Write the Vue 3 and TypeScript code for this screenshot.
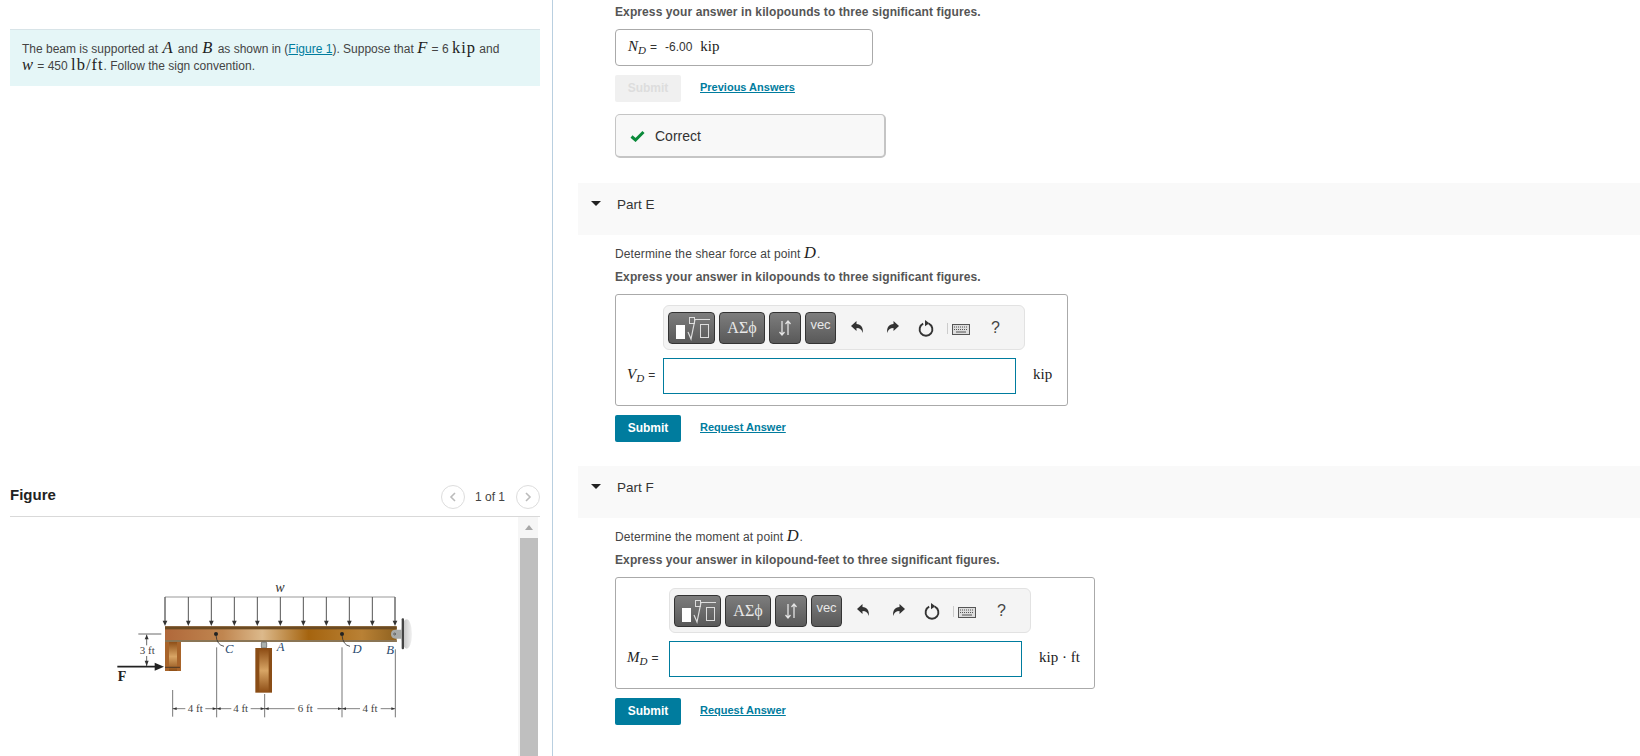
<script setup lang="ts">
interface Part {
  name: string
  determine: string
  express: string
  symbol: string
  unit: string
  labelWidth: number
  id: string
}
const parts: Part[] = [
  { id: 'e', name: 'Part E', determine: 'Determine the shear force at point', express: 'Express your answer in kilopounds to three significant figures.', symbol: 'V', unit: 'kip', labelWidth: 36 },
  { id: 'f', name: 'Part F', determine: 'Determine the moment at point', express: 'Express your answer in kilopound-feet to three significant figures.', symbol: 'M', unit: 'kip · ft', labelWidth: 42 },
]
const arrows: number[] = [195, 265, 334, 403, 472, 541, 610, 679, 748, 817, 885]
</script>

<template>
  <div class="page">
    <section class="left">
      <div class="intro">
        The beam is supported at <i class="m big gap">A</i> and <i class="m big gap">B</i> as shown in (<a class="lnk">Figure 1</a>). Suppose that <i class="m big">F</i> = 6 <span class="m big">kip</span> and<br />
        <i class="m big">w</i> = 450 <span class="m big">lb/ft</span>. Follow the sign convention.
      </div>
      <div class="fig-head">
        <h2>Figure</h2>
        <div class="pager">
          <span class="circle"><svg width="8" height="12" viewBox="0 0 8 12"><path d="M6 2 2 6l4 4" fill="none" stroke="#bbb" stroke-width="1.6" /></svg></span>
          <span class="count">1 of 1</span>
          <span class="circle"><svg width="8" height="12" viewBox="0 0 8 12"><path d="M2 2l4 4-4 4" fill="none" stroke="#bbb" stroke-width="1.6" /></svg></span>
        </div>
      </div>
      <div class="fig-body">
        <div class="fig-canvas">
          <svg width="330" height="160" viewBox="0 0 990 480">
            <defs>
              <linearGradient id="beam" x1="0" x2="1" y1="0" y2="0">
                <stop offset="0" stop-color="#b0683a" />
                <stop offset="0.25" stop-color="#c08650" />
                <stop offset="0.42" stop-color="#dcb98b" />
                <stop offset="0.62" stop-color="#a5640f" />
                <stop offset="0.85" stop-color="#b98135" />
                <stop offset="1" stop-color="#8f6220" />
              </linearGradient>
              <linearGradient id="col" x1="0" x2="0" y1="0" y2="1">
                <stop offset="0" stop-color="#8f4f17" />
                <stop offset="0.5" stop-color="#d8a565" />
                <stop offset="1" stop-color="#8f4f17" />
              </linearGradient>
              <linearGradient id="wall" x1="0" x2="1" y1="0" y2="0">
                <stop offset="0" stop-color="#bbb" />
                <stop offset="1" stop-color="#f2f2f2" />
              </linearGradient>
            </defs>
            <text x="540" y="65" class="t it big2" text-anchor="middle">w</text>
            <path d="M195 158V81H885V158" fill="none" stroke="#999" stroke-width="3" />
            <g v-for="x in arrows" :key="x">
              <path :d="`M${x} 81V158`" stroke="#555" stroke-width="3" />
              <path :d="`M${x - 7} 152H${x + 7}L${x} 168Z`" fill="#333" />
            </g>
            <rect x="195" y="169" width="695" height="47" fill="url(#beam)" />
            <rect x="195" y="169" width="695" height="9" fill="#6b4a22" />
            <rect x="195" y="210" width="695" height="6" fill="#8a7555" />
            <ellipse cx="920" cy="192" rx="16" ry="44" fill="url(#wall)" />
            <rect x="905" y="145" width="7" height="93" rx="3" fill="#444" />
            <path d="M873 192q0-13 14-13h18v27h-18q-14 0-14-14Z" fill="#a8aaa8" />
            <circle cx="884" cy="192" r="3" fill="none" stroke="#444" stroke-width="2" />
            <circle cx="348" cy="192" r="6" fill="#222" />
            <path d="M348 195q2 30 24 34" fill="none" stroke="#333" stroke-width="2.5" />
            <circle cx="726" cy="192" r="6" fill="#222" />
            <path d="M726 195q2 30 24 34" fill="none" stroke="#333" stroke-width="2.5" />
            <rect x="195" y="216" width="48" height="87" fill="#a8642a" />
            <rect x="207" y="216" width="24" height="87" fill="url(#col)" />
            <path d="M195 292H240" stroke="#222" stroke-width="2" />
            <rect x="484" y="216" width="16" height="18" rx="3" fill="#a9b0ad" stroke="#555" stroke-width="2" />
            <rect x="466" y="234" width="50" height="134" fill="#8a4d16" />
            <rect x="478" y="238" width="28" height="128" fill="url(#col)" />
            <path d="M115 192H184M140 194V226M140 258V288" fill="none" stroke="#444" stroke-width="2.4" />
            <path d="M134 208 140 194 146 208ZM134 272 140 288 146 272Z" fill="#333" />
            <text x="142" y="252" class="t" text-anchor="middle">3 ft</text>
            <path d="M52 290H170" stroke="#222" stroke-width="5" />
            <path d="M164 278 192 290 164 302Z" fill="#222" />
            <text x="66" y="333" class="t b" text-anchor="middle">F</text>
            <text x="388" y="250" class="t it" text-anchor="middle">C</text>
            <text x="542" y="244" class="t it" text-anchor="middle">A</text>
            <text x="771" y="248" class="t it" text-anchor="middle">D</text>
            <text x="870" y="251" class="t it" text-anchor="middle">B</text>
            <path d="M350 232V442M726 232V442M886 238V442M218 360V440M494 372V442" stroke="#444" stroke-width="2.2" />
            <path d="M218 416H256M316 416H394M452 416H584M652 416H780M842 416H884" stroke="#444" stroke-width="2" />
            <path d="M218 416l12-4v8ZM350 416l-12-4v8ZM350 416l12-4v8ZM494 416l-12-4v8ZM494 416l12-4v8ZM726 416l-12-4v8ZM726 416l12-4v8ZM886 416l-12-4v8Z" fill="#333" />
            <text x="286" y="426" class="t" text-anchor="middle">4 ft</text>
            <text x="422" y="426" class="t" text-anchor="middle">4 ft</text>
            <text x="616" y="426" class="t" text-anchor="middle">6 ft</text>
            <text x="810" y="426" class="t" text-anchor="middle">4 ft</text>
          </svg>
        </div>
        <div class="scrollbar">
          <span class="up"></span>
          <span class="thumb"></span>
        </div>
      </div>
    </section>

    <main class="right">
      <p class="express first">Express your answer in kilopounds to three significant figures.</p>
      <div class="answer">
        <i class="m v">N<sub>D</sub></i><span class="eq">=</span><span class="val">-6.00</span><span class="m kip">kip</span>
      </div>
      <div class="actions prev">
        <button class="submit off">Submit</button>
        <a class="lnk strong">Previous Answers</a>
      </div>
      <div class="correct">
        <svg width="15" height="12" viewBox="0 0 15 12"><path d="M1.5 6.5 5.5 10 13.5 2" fill="none" stroke="#0a8a3a" stroke-width="3" /></svg>
        <span>Correct</span>
      </div>

      <template v-for="p in parts" :key="p.id">
        <header class="band" :class="'band-' + p.id">
          <span class="tri"></span>
          <span>{{ p.name }}</span>
        </header>
        <p class="determine">{{ p.determine }} <i class="m big">D</i>.</p>
        <p class="express">{{ p.express }}</p>
        <div class="box" :class="'box-' + p.id">
          <div class="tools" :style="{ marginLeft: p.labelWidth + 'px' }">
            <button class="tb t1">
              <svg width="45" height="30" viewBox="0 0 45 30">
                <rect x="7" y="12" width="9" height="14" fill="#fff" />
                <rect x="20.5" y="4.5" width="5" height="6" fill="none" stroke="#ddd" />
                <path d="M19 19l3 7L26 6.5H41" fill="none" stroke="#ddd" stroke-width="1.2" />
                <rect x="31.5" y="11.5" width="8" height="13" fill="none" stroke="#ddd" />
              </svg>
            </button>
            <button class="tb t2">ΑΣϕ</button>
            <button class="tb t3">
              <svg width="14" height="18" viewBox="0 0 14 18"><path d="M4 2V16M1.5 13 4 16 6.5 13M10 16V2M7.5 5 10 2 12.5 5" fill="none" stroke="#e4e4e4" stroke-width="1.3" /></svg>
            </button>
            <button class="tb t4">vec</button>
            <svg class="ic undo" width="14" height="16" viewBox="0 0 14 16"><path d="M1 6 6.5 1V4C11 4 13.5 7.5 12.8 13 11.8 9.5 10 8 6.5 8V11Z" fill="#333" /></svg>
            <svg class="ic redo" width="14" height="16" viewBox="0 0 14 16"><path d="M13 6 7.5 1V4C3 4 .5 7.5 1.2 13 2.2 9.5 4 8 7.5 8V11Z" fill="#333" /></svg>
            <svg class="ic reset" width="16" height="18" viewBox="0 0 16 18"><path d="M10.8 4.6A6.4 6.4 0 1 1 5.2 4.6" fill="none" stroke="#333" stroke-width="1.9" /><path d="M7 1 11.4 4.2 7 7.2Z" fill="#333" /></svg>
            <span class="sep"></span>
            <svg class="ic kb" width="18" height="11" viewBox="0 0 18 11"><rect x=".5" y=".5" width="17" height="10" fill="#ddd" stroke="#555" /><path d="M2 3H16M2 5.5H16" stroke="#555" stroke-dasharray="1 1" /><path d="M4 8H14" stroke="#555" /></svg>
            <span class="help">?</span>
          </div>
          <div class="row">
            <span class="label" :style="{ width: p.labelWidth + 'px' }"><i class="m v">{{ p.symbol }}<sub>D</sub></i><span class="eq">=</span></span>
            <span class="input"></span>
            <span class="m unit">{{ p.unit }}</span>
          </div>
        </div>
        <div class="actions">
          <button class="submit">Submit</button>
          <a class="lnk strong">Request Answer</a>
        </div>
      </template>
    </main>
  </div>
</template>

<style scoped>
.page {
  display: flex;
  height: 756px;
  overflow: hidden;
  font-family: "Liberation Sans", Arial, sans-serif;
  font-size: 12px;
  color: #444;
  background: #fff;
}
.left {
  width: 553px;
  flex: none;
  box-sizing: border-box;
  border-right: 1px solid #b9cfe0;
  padding: 29px 12px 0 10px;
  display: flex;
  flex-direction: column;
}
.intro {
  height: 57px;
  box-sizing: border-box;
  border-top: 1px solid #d8e4e8;
  background: #e5f6f7;
  padding: 10px 12px;
  line-height: 16px;
}
.m { font-family: "Liberation Serif", "Times New Roman", serif; color: #222; }
.big { font-size: 16.5px; letter-spacing: 1px; }
.gap { margin: 0 1px; }
.lnk { color: #007c9e; text-decoration: underline; }
.strong { font-size: 11px; font-weight: 700; padding-bottom: 3px; }
.fig-head {
  margin-top: 384px;
  height: 47px;
  box-sizing: border-box;
  border-bottom: 1px solid #d9d9d9;
  display: flex;
  align-items: center;
  justify-content: space-between;
}
h2 { margin: 2px 0 0; font-size: 15px; font-weight: 700; color: #222; }
.pager { display: flex; align-items: center; gap: 10px; margin-top: 7px; }
.circle {
  width: 24px;
  height: 24px;
  box-sizing: border-box;
  border: 1px solid #ddd;
  border-radius: 50%;
  display: flex;
  align-items: center;
  justify-content: center;
}
.count { color: #444; margin-right: 1px; }
.fig-body { flex: 1; display: flex; min-height: 0; }
.fig-canvas { flex: 1; padding: 53px 0 0 90px; }
.scrollbar {
  width: 20px;
  box-sizing: border-box;
  padding-left: 2px;
  margin-right: 2px;
  flex: none;
  display: flex;
  flex-direction: column;
  background: #f6f6f6;
}
.up {
  height: 21px;
  flex: none;
  display: block;
  position: relative;
}
.up::before {
  content: "";
  position: absolute;
  left: 5px;
  top: 8px;
  border: 4px solid transparent;
  border-top: 0;
  border-bottom: 5px solid #a8a8a8;
}
.thumb { flex: 1; background: #bfbfbf; }
.t { font-family: "Liberation Serif", serif; font-size: 33px; fill: #444; }
.it { font-style: italic; font-size: 38px; fill: #2a4a70; }
.big2 { font-size: 42px; fill: #333; }
.b { font-weight: 700; font-size: 42px; fill: #222; }

.right {
  flex: 1;
  min-width: 0;
  padding: 5px 0 0 25px;
}
p { margin: 0; }
.express {
  margin-left: 37px;
  line-height: 14px;
  font-weight: 700;
  font-size: 12px;
  color: #555;
  letter-spacing: 0.1px;
}
.first { margin-bottom: 10px; }
.answer {
  margin-left: 37px;
  width: 258px;
  height: 37px;
  box-sizing: border-box;
  border: 1px solid #aaa;
  border-radius: 4px;
  padding: 0 0 2px 12px;
  display: flex;
  align-items: center;
}
.v { font-size: 15px; }
sub { font-size: 11px; vertical-align: -3px; line-height: 0; }
.eq { margin: 0 8px 0 4px; font-size: 12px; color: #333; }
.val { font-size: 12px; margin-right: 8px; color: #333; }
.kip { font-size: 15px; }
.actions {
  margin-left: 37px;
  display: flex;
  align-items: center;
  gap: 19px;
}
.prev { margin-top: 9px; }
button { font-family: inherit; margin: 0; padding: 0; }
.submit {
  width: 66px;
  height: 27px;
  border: 0;
  border-radius: 2px;
  background: #007c9e;
  color: #fff;
  font-weight: 700;
  font-size: 12px;
  padding-bottom: 2px;
}
.submit.off { background: #f0f0f0; color: #ddd; }
.correct {
  margin: 12px 0 0 37px;
  width: 271px;
  height: 44px;
  box-sizing: border-box;
  border: 1px solid #c5c5c5;
  border-bottom-width: 2px;
  border-right-width: 2px;
  border-radius: 5px;
  background: #f8f8f8;
  display: flex;
  align-items: center;
  gap: 10px;
  padding-left: 14px;
  font-size: 14px;
  color: #333;
}
.band {
  height: 52px;
  background: #f9f9f9;
  display: flex;
  align-items: flex-start;
  padding-top: 14px;
  box-sizing: border-box;
  font-size: 13.5px;
  color: #333;
  line-height: 15px;
}
.band-e { margin-top: 25px; }
.band-f { margin-top: 24px; }
.tri {
  margin: 4px 16px 0 13px;
  border: 5px solid transparent;
  border-bottom: 0;
  border-top: 5px solid #222;
}
.determine {
  margin: 9px 0 7px 37px;
  line-height: 17px;
  color: #444;
  letter-spacing: 0.12px;
}
.box {
  margin: 10px 0 9px 37px;
  box-sizing: border-box;
  border: 1px solid #aaa;
  border-radius: 3px;
  padding: 10px 0 11px 11px;
}
.box-e { width: 453px; }
.box-f { width: 480px; }
.tools {
  width: 362px;
  height: 45px;
  box-sizing: border-box;
  border: 1px solid #e2e2e2;
  border-radius: 6px;
  background: #f4f4f4;
  display: flex;
  align-items: center;
  padding-left: 4px;
}
.tb {
  height: 32px;
  box-sizing: border-box;
  border: 1px solid #333;
  border-radius: 4px;
  background: linear-gradient(#7d7d7d, #595959);
  color: #e8e8e8;
  display: flex;
  align-items: center;
  justify-content: center;
  margin-right: 4px;
  flex: none;
}
.t1 { width: 47px; }
.t2 { width: 46px; font-family: "Liberation Serif", serif; font-size: 16px; }
.t3 { width: 32px; }
.t4 { width: 31px; font-size: 13px; align-items: flex-start; padding-top: 4px; }
.ic { flex: none; }
.undo { margin-left: 10px; }
.redo { margin-left: 22px; }
.reset { margin-left: 18px; }
.sep { width: 1px; height: 11px; background: #ccc; margin: 2px 4px 0 13px; }
.kb { margin-top: 3px; }
.help { margin-left: 21px; font-size: 16px; color: #444; }
.row {
  display: flex;
  align-items: center;
  margin-top: 8px;
}
.label { flex: none; white-space: nowrap; display: flex; align-items: center; padding-bottom: 3px; }
.label .eq { margin: 0 0 0 4px; }
.input {
  width: 353px;
  height: 36px;
  box-sizing: border-box;
  border: 1px solid #007c9e;
  background: #fff;
  flex: none;
}
.unit { margin-left: 17px; font-size: 15px; white-space: nowrap; padding-bottom: 3px; }
</style>

<style>
html, body { margin: 0; padding: 0; background: #fff; }
</style>
